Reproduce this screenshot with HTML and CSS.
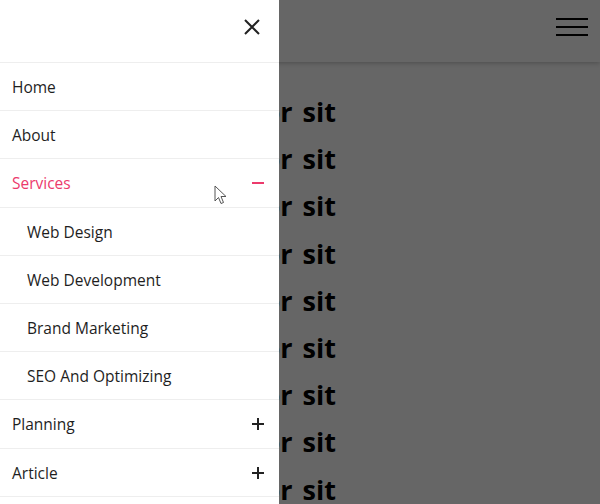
FILE: index.html
```html
<!DOCTYPE html>
<html>
<head>
<meta charset="utf-8">
<link rel="stylesheet" href="styles.css">
</head>
<body>
<header class="topbar">
  <button class="burger" aria-label="menu"><span></span><span></span><span></span></button>
</header>
<main class="content">
  <p>Lorem ipsum dolor sit</p>
  <p>Lorem ipsum dolor sit</p>
  <p>Lorem ipsum dolor sit</p>
  <p>Lorem ipsum dolor sit</p>
  <p>Lorem ipsum dolor sit</p>
  <p>Lorem ipsum dolor sit</p>
  <p>Lorem ipsum dolor sit</p>
  <p>Lorem ipsum dolor sit</p>
  <p>Lorem ipsum dolor sit</p>
</main>
<div class="overlay"></div>
<nav class="drawer">
  <div class="drawer-head">
    <svg class="close" width="16" height="16" viewBox="0 0 16 16"><path d="M1 1L15 15M15 1L1 15" stroke="#222" stroke-width="2" fill="none"/></svg>
  </div>
  <ul class="menu">
    <li class="item"><span>Home</span></li>
    <li class="item"><span>About</span></li>
    <li class="item active"><span>Services</span><span class="toggle minus"></span></li>
    <li class="item sub"><span>Web Design</span></li>
    <li class="item sub"><span>Web Development</span></li>
    <li class="item sub"><span>Brand Marketing</span></li>
    <li class="item sub"><span>SEO And Optimizing</span></li>
    <li class="item"><span>Planning</span><span class="toggle plus"></span></li>
    <li class="item"><span>Article</span><span class="toggle plus"></span></li>
  </ul>
  <svg class="cursor" width="14" height="20" viewBox="0 0 14 20"><path d="M1 1V16L4.5 12.5L7 18.5L9.5 17.5L7 11.5H12Z" fill="#fff" stroke="#555" stroke-width="1"/></svg>
</nav>
</body>
</html>
```
FILE: styles.css
```css
* { box-sizing: border-box; margin: 0; padding: 0; }
html, body { width: 600px; height: 504px; overflow: hidden; }
body { font-family: "Open Sans", "Noto Sans", sans-serif; background: #fff; position: relative; }
.topbar { height: 62px; display: flex; justify-content: flex-end; align-items: flex-start; padding: 18px 12px 0 0; box-shadow: 0 1px 5px rgba(0,0,0,0.25); position: relative; z-index: 1; background: #fff; }
.burger { width: 32px; height: 18px; background: none; border: 0; display: flex; flex-direction: column; justify-content: space-between; }
.burger span { display: block; height: 2px; background: #000; }
.content { width: 336px; text-align: right; padding-top: 26px; }
.content p { font-size: 27px; font-weight: 700; line-height: 47.2px; word-spacing: 3px; color: #000; white-space: nowrap; }
.overlay { position: absolute; inset: 0; background: rgba(0,0,0,0.6); z-index: 2; }
.drawer { position: absolute; left: 0; top: 0; bottom: 0; width: 279px; background: #fff; z-index: 3; }
.drawer-head { height: 63px; display: flex; justify-content: flex-end; align-items: flex-start; padding: 19px 19px 0 0; border-bottom: 1px solid #eee; }
.menu { list-style: none; }
.item { height: 48.2px; display: flex; align-items: center; justify-content: space-between; padding: 1px 15px 0 12px; border-bottom: 1px solid #eee; font-size: 15.5px; font-weight: 500; color: #1e1e1e; }
.item.sub { padding-left: 27px; }
.item.active { color: #ec3a6c; }
.toggle { width: 12px; height: 12px; position: relative; }
.toggle::before, .toggle::after { content: ""; position: absolute; background: #222; }
.toggle::before { left: 0; right: 0; top: 5px; height: 2px; }
.plus::after { top: 0; bottom: 0; left: 5px; width: 2px; }
.minus::before { background: #ec3a6c; }
.minus::after { display: none; }
.cursor { position: absolute; left: 214px; top: 185px; }
```
